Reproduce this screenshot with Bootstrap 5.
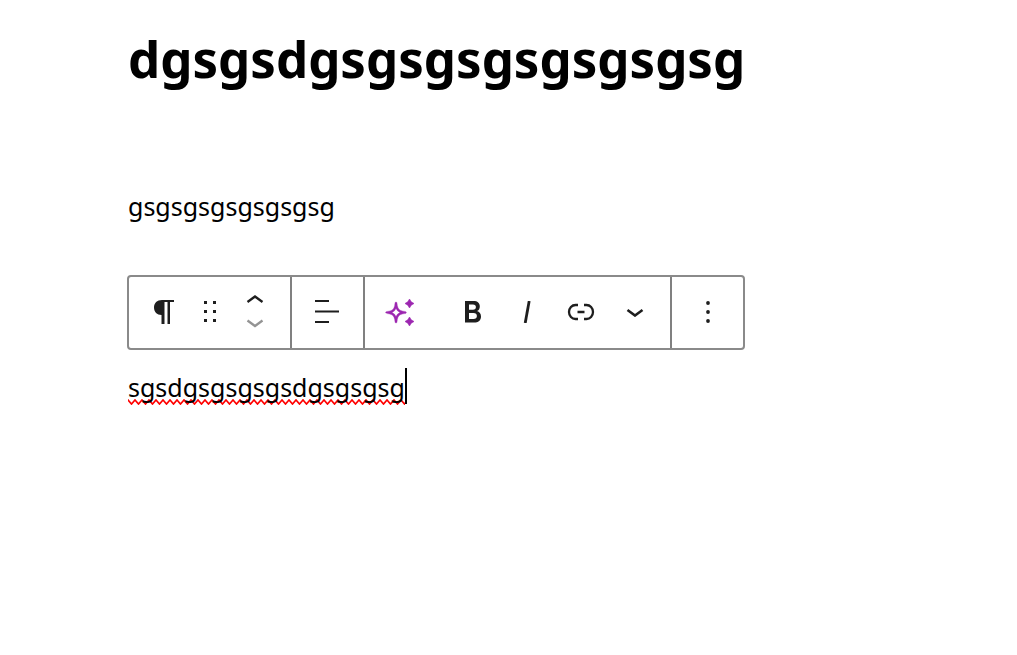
<!DOCTYPE html>
<html lang="en">
<head>
<meta charset="utf-8">
<meta name="viewport" content="width=device-width, initial-scale=1">
<title>Block editor</title>
<link rel="stylesheet" href="https://cdn.jsdelivr.net/npm/bootstrap@5.3.0/dist/css/bootstrap.min.css">
<style>
body { font-family: "Segoe UI", "Noto Sans", sans-serif; color: #000; background: #fff; }
.editor { padding: 22px 128px; }
.post-title { font-size: 51px; line-height: 72px; font-weight: 700; margin: 0 0 94px; }
.block-text { font-size: 25px; line-height: 36px; margin: 0; }
.block-bar { border: 2px solid #8a8a8a; border-radius: 4px; height: 75px; margin: 51px 0 19px -1px; }
.bar-group { display: flex; align-items: center; justify-content: center; padding: 0 8px 2px; }
.bar-group + .bar-group { border-left: 2px solid #808080; }
.bar-group.move-group { padding: 0 13px 2px 12px; }
.tool { border: 0; padding: 0; background: none; color: #1e1e1e; line-height: 0; display: flex; align-items: center; justify-content: center; width: 54px; height: 54px; }
.tool.slim { width: 46px; }
.tool.half { width: 44px; height: 24px; }
.tool:disabled { color: #949494; }
.tool.ai { color: #9c27b0; margin-right: 19px; }
.bar-group.wide { width: 73px; }
.misspelt { background: url("data:image/svg+xml,%3Csvg xmlns='http://www.w3.org/2000/svg' width='7' height='6'%3E%3Cpath d='M-3.500 5L0 1L3.500 5L7 1L10.500 5' fill='none' stroke='%23f00' stroke-width='1.700'/%3E%3C/svg%3E") repeat-x left bottom; }
.caret { width: 2px; height: 36px; margin-top: -1px; background: #000; }
</style>
</head>
<body>
<main class="editor">
  <h1 class="post-title">dgsgsdgsgsgsgsgsgsgsg</h1>
  <p class="block-text">gsgsgsgsgsgsgsg</p>
  <div class="block-bar d-inline-flex align-items-stretch" role="toolbar" aria-label="Block tools">
    <div class="bar-group move-group">
      <button class="tool slim" type="button" aria-label="Paragraph"><svg width="22" height="26" viewBox="0 0 22 26" fill="currentColor"><path d="M9 1H21V3H17V25H14.500V3H11.500V25H8.500V16C4 16 1 13 1 8.500S4 1 9 1Z"/></svg></button>
      <button class="tool slim" type="button" aria-label="Drag"><svg width="14" height="22" viewBox="0 0 14 22" fill="currentColor"><path d="M1 0h3v3h-3zM10 0h3v3h-3zM1 9h3v3h-3zM10 9h3v3h-3zM1 18h3v3h-3zM10 18h3v3h-3z"/></svg></button>
      <div>
        <button class="tool half" type="button" aria-label="Move up"><svg width="18" height="10" viewBox="0 0 18 10" fill="none" stroke="currentColor" stroke-width="2.300"><path d="M1.500 7L9 1.500L16.500 7"/></svg></button>
        <button class="tool half" type="button" aria-label="Move down" disabled><svg width="18" height="10" viewBox="0 0 18 10" fill="none" stroke="currentColor" stroke-width="2.300"><path d="M1.500 1.500L9 7L16.500 1.500"/></svg></button>
      </div>
    </div>
    <div class="bar-group wide">
      <button class="tool" type="button" aria-label="Align"><svg width="26" height="26" viewBox="0 0 26 26" stroke="currentColor" stroke-width="2"><path d="M0 2H14M0 12.500H24M0 23H14"/></svg></button>
    </div>
    <div class="bar-group">
      <button class="tool ai" type="button" aria-label="AI assistant"><svg width="30" height="30" viewBox="0 0 30 30" fill="currentColor"><path fill-rule="evenodd" d="M11 5C12 5 12 6 12.300 8.500C13 12 14.500 13.500 18 14.200C20.500 14.500 21.300 14.500 21.300 15.500S20.500 16.500 18 16.800C14.500 17.500 13 19 12.300 22.500C12 25 12 26 11 26S10 25 9.700 22.500C9 19 7.500 17.500 4 16.800C1.500 16.500 .7 16.500 .7 15.500S1.500 14.500 4 14.200C7.500 13.500 9 12 9.700 8.500C10 6 10 5 11 5ZM11 11.500Q9.800 14.300 7 15.500Q9.800 16.700 11 19.500Q12.200 16.700 15 15.500Q12.200 14.300 11 11.500Z" stroke="currentColor" stroke-width=".4"/><path d="M24.500 2L26.200 4.800L29 6.500L26.200 8.200L24.500 11L22.800 8.200L20 6.500L22.800 4.800ZM24.500 20L26.200 22.800L29 24.500L26.200 26.200L24.500 29L22.800 26.200L20 24.500L22.800 22.800Z" stroke="currentColor" stroke-width=".6" stroke-linejoin="round"/></svg></button>
      <button class="tool" type="button" aria-label="Bold"><svg width="18" height="22" viewBox="0 0 18 22" fill="currentColor"><path fill-rule="evenodd" d="M1 0H9.500C13.500 0 15.800 2 15.800 5.500C15.800 7.800 14.700 9.400 13 10.100C15.500 10.900 17 12.800 17 15.400C17 19.300 14.300 21.500 10 21.500H1ZM5 3.500V8.800H9C10.900 8.800 11.900 7.800 11.900 6.100S10.900 3.500 9 3.500ZM5 12V18H9.500C11.700 18 12.900 16.900 12.900 15S11.700 12 9.500 12Z"/></svg></button>
      <button class="tool" type="button" aria-label="Italic"><svg width="10" height="22" viewBox="0 0 10 22" stroke="currentColor" stroke-width="2.800"><path d="M7.200 0L3.200 22"/></svg></button>
      <button class="tool" type="button" aria-label="Link"><svg width="28" height="18" viewBox="0 0 28 18" fill="none" stroke="currentColor" stroke-width="2.300"><path d="M11 2H8.500A6.500 7 0 0 0 8.500 16H11M17 2H19.500A6.500 7 0 0 1 19.500 16H17M10.500 9H17.500"/></svg></button>
      <button class="tool" type="button" aria-label="More"><svg width="18" height="10" viewBox="0 0 18 10" fill="none" stroke="currentColor" stroke-width="2.600"><path d="M1.500 3L9 8.500L16.500 3"/></svg></button>
    </div>
    <div class="bar-group wide">
      <button class="tool" type="button" aria-label="Options"><svg width="4" height="22" viewBox="0 0 4 22" fill="currentColor"><circle cx="2" cy="2" r="1.900"/><circle cx="2" cy="11" r="1.900"/><circle cx="2" cy="20" r="1.900"/></svg></button>
    </div>
  </div>
  <p class="block-text d-flex"><span class="misspelt">sgsdgsgsgsgsdgsgsgsg</span><span class="caret"></span></p>
</main>
<script src="https://cdn.jsdelivr.net/npm/bootstrap@5.3.0/dist/js/bootstrap.bundle.min.js"></script>
</body>
</html>
